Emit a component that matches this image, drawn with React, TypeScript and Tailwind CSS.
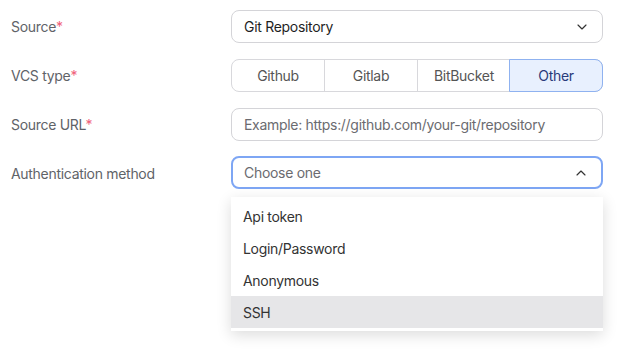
import { ChevronDown, ChevronUp } from "lucide-react";

const vcsTypes = ["Github", "Gitlab", "BitBucket", "Other"];
const authOptions = ["Api token", "Login/Password", "Anonymous", "SSH"];

function Label({ text, required }: { text: string; required?: boolean }) {
  return (
    <div className="w-[220px] shrink-0 text-[14px] text-[#5f6368]">
      {text}
      {required && <span className="text-[#f0607a]">*</span>}
    </div>
  );
}

export default function App() {
  const selectedVcs = "Other";
  const hovered = "SSH";

  return (
    <div
      className="w-[620px] h-[350px] bg-white pl-[11px] pr-[17px] pt-[10px] flex flex-col gap-4 tracking-[-0.3px]"
      style={{ fontFamily: "Inter, 'Noto Sans', sans-serif" }}
    >
      <div className="flex items-center">
        <Label text="Source" required />
        <div className="flex-1 h-[33px] flex items-center justify-between rounded-lg border border-[#d4d4d8] px-3 text-[14px] text-[#1f1f1f]">
          <span>Git Repository</span>
          <ChevronDown size={16} strokeWidth={1.75} className="text-[#333]" />
        </div>
      </div>

      <div className="flex items-center">
        <Label text="VCS type" required />
        <div className="flex-1 h-[33px] flex rounded-lg border border-[#d8d8dc] text-[14px] text-[#555]">
          {vcsTypes.map((t, i) => (
            <div
              key={t}
              className={
                t === selectedVcs
                  ? "flex-1 flex items-center justify-center -m-px rounded-r-lg border border-[#8fb2f0] bg-[#e8f0fe] text-[#283a7a]"
                  : i === 0
                  ? "flex-1 flex items-center justify-center"
                  : "flex-1 flex items-center justify-center border-l border-[#d8d8dc]"
              }
            >
              {t}
            </div>
          ))}
        </div>
      </div>

      <div className="flex items-center">
        <Label text="Source URL" required />
        <div className="flex-1 h-[33px] flex items-center rounded-lg border border-[#d4d4d8] px-3 text-[14px] text-[#6b6b70]">
          Example: https://github.com/your-git/repository
        </div>
      </div>

      <div className="flex items-center">
        <Label text="Authentication method" />
        <div className="relative flex-1">
          <div className="h-[33px] -mt-px flex items-center justify-between rounded-lg border-2 border-[#7ea6f4] pl-[11px] pr-3 text-[14px] text-[#6b6b70]">
            <span>Choose one</span>
            <ChevronUp size={16} strokeWidth={1.75} className="text-[#333]" />
          </div>
          <div className="absolute left-0 right-0 top-[40px] bg-white py-[3px] shadow-[0_4px_14px_rgba(0,0,0,0.14)]">
            {authOptions.map((o) => (
              <div
                key={o}
                className={
                  o === hovered
                    ? "h-[32px] flex items-center px-3 text-[14px] text-[#333] bg-[#e6e6e8]"
                    : "h-[32px] flex items-center px-3 text-[14px] text-[#333]"
                }
              >
                {o}
              </div>
            ))}
          </div>
        </div>
      </div>
    </div>
  );
}
